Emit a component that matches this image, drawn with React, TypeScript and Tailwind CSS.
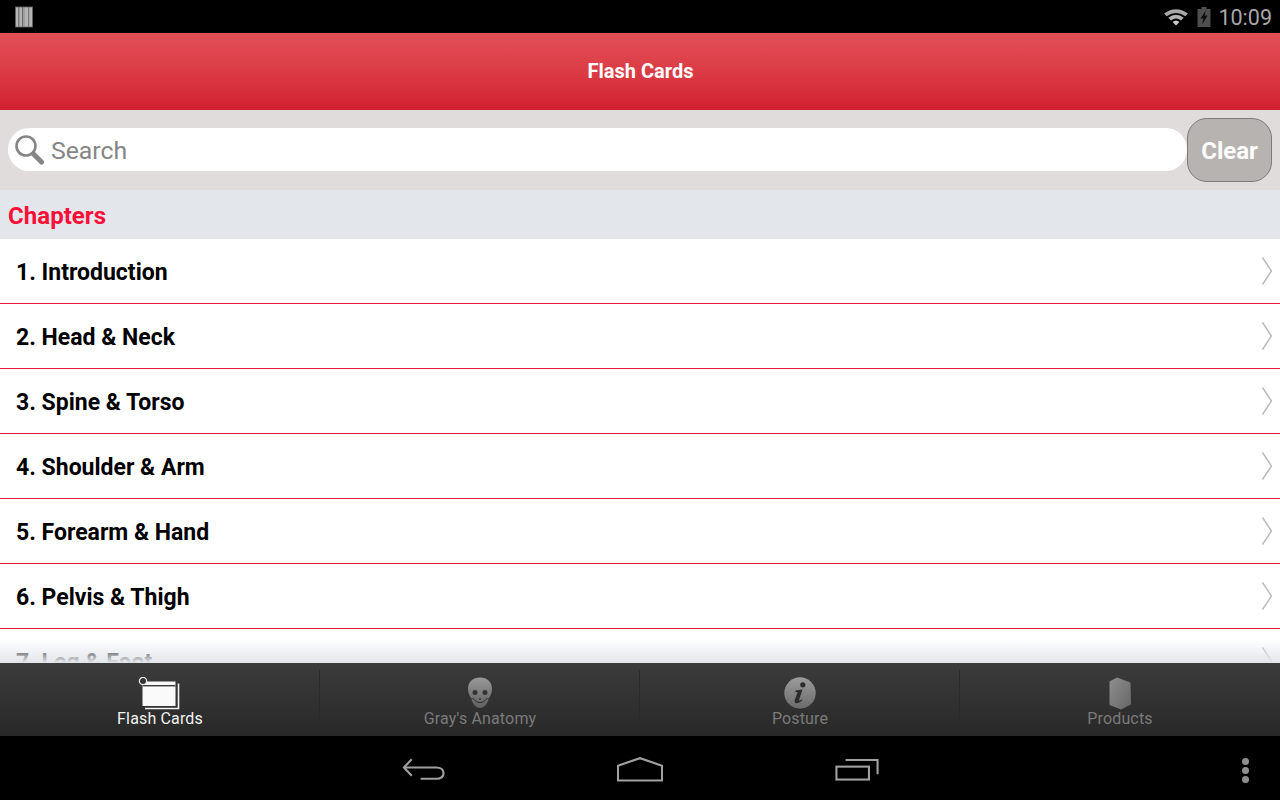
import React from "react";

const chapters = ["1. Introduction", "2. Head & Neck", "3. Spine & Torso", "4. Shoulder & Arm", "5. Forearm & Hand", "6. Pelvis & Thigh", "7. Leg & Foot"];

function Chevron() {
  return (
    <svg width="14" height="30" viewBox="0 0 14 30" className="shrink-0" fill="none">
      <path d="M1.5 1.5 L10.5 15 L1.5 28.5" stroke="#b9b9b9" strokeWidth="1.4" />
    </svg>
  );
}

function Barcode() {
  return (
    <svg width="18" height="22" viewBox="0 0 18 22">
      <rect x="0.5" y="1" width="17" height="20" fill="#b5b5b5" />
      <rect x="3" y="1" width="1.5" height="20" fill="#777" />
      <rect x="7" y="1" width="1" height="20" fill="#666" />
      <rect x="8.5" y="1" width="1" height="20" fill="#888" />
      <rect x="13" y="1" width="1.2" height="20" fill="#777" />
      <rect x="0" y="1" width="18" height="20" fill="none" stroke="#666" strokeWidth="0.8" />
    </svg>
  );
}

function Wifi() {
  return (
    <svg width="26" height="18" viewBox="0 0 26 18" fill="none">
      <path d="M1 5.5 Q13 -3 25 5.5 L22.3 8.3 Q13 1.5 3.7 8.3 Z" fill="#a8a8a8" />
      <path d="M5.3 9.8 Q13 3.5 20.7 9.8 L18 12.5 Q13 8.5 8 12.5 Z" fill="#b4b4b4" />
      <path d="M9.5 14 Q13 10.8 16.5 14 L13 17.5 Z" fill="#c8c8c8" />
    </svg>
  );
}

function Battery() {
  return (
    <svg width="14" height="20" viewBox="0 0 14 20">
      <rect x="4.5" y="0" width="5" height="2" fill="#4e4e4e" />
      <rect x="0.5" y="2" width="13" height="18" fill="#4e4e4e" />
      <path d="M8.8 3.5 L3.5 11.5 H6.5 L5.2 17.5 L10.5 8.5 H7.5 Z" fill="#0c0c0c" />
    </svg>
  );
}

function Magnifier() {
  return (
    <svg width="31" height="32" viewBox="0 0 31 32" fill="none">
      <circle cx="12" cy="12" r="9.5" stroke="#868686" strokeWidth="2.6" fill="#fff" />
      <path d="M20 20.5 L27.5 28" stroke="#868686" strokeWidth="5" strokeLinecap="round" />
    </svg>
  );
}

function CardsIcon() {
  return (
    <svg width="44" height="33" viewBox="0 0 44 33" fill="none">
      <path d="M40.5 6.5 V31.5 H7" stroke="#f2f2f2" strokeWidth="1.6" />
      <rect x="4.5" y="4.5" width="33" height="24.5" fill="#fafafa" />
      <rect x="4.5" y="8" width="33" height="1.4" fill="#3a3a3a" />
      <circle cx="5" cy="4" r="3.6" stroke="#e8e8e8" strokeWidth="1.3" fill="#333" />
    </svg>
  );
}

function SkullIcon() {
  return (
    <svg width="26" height="32" viewBox="0 0 26 32">
      <defs>
        <linearGradient id="sk" x1="0" y1="0" x2="0" y2="1">
          <stop offset="0" stopColor="#9a9a9a" />
          <stop offset="1" stopColor="#5f5f5f" />
        </linearGradient>
      </defs>
      <path d="M13 0.5 C20 0.5 25 5 25 11.5 C25 16 23.5 19 21.5 21.5 C21 26 18 30.5 13 31 C8 30.5 5 26 4.5 21.5 C2.5 19 1 16 1 11.5 C1 5 6 0.5 13 0.5 Z" fill="url(#sk)" />
      <circle cx="8" cy="15.5" r="2.5" fill="#333" />
      <circle cx="18" cy="15.5" r="2.5" fill="#333" />
      <circle cx="13" cy="22" r="0.9" fill="#333" />
      <path d="M5.5 21 Q13 30 20.5 21" stroke="#333" strokeWidth="1.1" fill="none" />
    </svg>
  );
}

function InfoIcon() {
  return (
    <svg width="32" height="32" viewBox="0 0 32 32">
      <defs>
        <linearGradient id="inf" x1="0" y1="0" x2="0" y2="1">
          <stop offset="0" stopColor="#9c9c9c" />
          <stop offset="1" stopColor="#6a6a6a" />
        </linearGradient>
      </defs>
      <circle cx="16" cy="16" r="15.7" fill="url(#inf)" />
      <circle cx="18.8" cy="7.8" r="2.6" fill="#2c2c2c" />
      <path d="M11.5 13.5 L18.5 12.5 L15 23 C14.8 24 15.6 24.2 18 22.3 L18.4 23.3 C15.5 26 13.4 26.5 11.6 26 C10.3 25.5 10.4 24 10.8 22.8 L13.6 15.3 L11.3 15 Z" fill="#2c2c2c" />
    </svg>
  );
}

function BoxIcon() {
  return (
    <svg width="24" height="33" viewBox="0 0 24 33">
      <defs>
        <linearGradient id="bx" x1="0" y1="0" x2="1" y2="1">
          <stop offset="0" stopColor="#8f8f8f" />
          <stop offset="1" stopColor="#666" />
        </linearGradient>
      </defs>
      <path d="M9 0.5 L22.5 5.5 L23 27.5 L13 32.5 L1.5 28 L1.5 4.5 Z" fill="url(#bx)" />
    </svg>
  );
}

function Tab({ label, active, icon, divider }: { label: string; active?: boolean; icon: React.ReactNode; divider?: boolean }) {
  return (
    <div className="relative flex-1 flex flex-col items-center">
      <div className="h-[38px] mt-[14px] flex items-start justify-center">{icon}</div>
      <span className={`text-[16px] leading-[19px] -mt-[6px] tracking-[0.15px] ${active ? "text-[#f2f2f2]" : "text-[#7a7a7a]"}`}>{label}</span>
      {divider && <div className="absolute right-0 top-[7px] bottom-[14px] w-px bg-[#2a2a2a]" />}
    </div>
  );
}

export default function App() {
  return (
    <div className="w-[1280px] h-[800px] flex flex-col overflow-hidden bg-white font-['Roboto',sans-serif]">
      <div className="h-[33px] bg-black flex items-center justify-between pl-[15px] pr-[8px] shrink-0">
        <Barcode />
        <div className="flex items-center">
          <Wifi />
          <div className="ml-[8px] mr-[7px]"><Battery /></div>
          <span className="text-[21.5px] leading-none text-[#a8a8a8] pt-[2px]">10:09</span>
        </div>
      </div>

      <div className="h-[77px] shrink-0 flex items-center justify-center bg-gradient-to-b from-[#e35058] to-[#d21f30]">
        <span className="text-white font-bold text-[20px] leading-none -mt-[2px] pl-[1px]">Flash Cards</span>
      </div>

      <div className="h-[80px] shrink-0 bg-[#e0dcdb] flex items-center pl-[8px] pr-[8px]">
        <div className="flex-1 h-[43px] -mt-[1px] bg-white rounded-[21px] flex items-center pl-[6px]">
          <Magnifier />
          <span className="ml-[6px] text-[24.8px] leading-none text-[#858585] pt-[4px]">Search</span>
        </div>
        <div className="w-[85px] h-[64px] -mt-[1px] shrink-0 rounded-[20px] bg-[#b7b3b1] border border-[#7c7a79] flex items-center justify-center">
          <span className="text-white font-bold text-[24px] leading-none pt-[2px]">Clear</span>
        </div>
      </div>

      <div className="h-[49px] shrink-0 bg-[#e3e6eb] flex items-center pl-[8px]">
        <span className="text-[#fb0f38] font-bold text-[24px] leading-none pt-[3px] tracking-[0.05px]">Chapters</span>
      </div>

      <div className="relative flex-1 min-h-0 overflow-hidden">
        {chapters.map((c) => (
          <div key={c} className="h-[65px] border-b border-[#e5173f] flex items-center justify-between pl-[16px] pr-[5px]">
            <span className="text-black font-bold text-[23px] leading-none pt-[3px]">{c}</span>
            <Chevron />
          </div>
        ))}
        <div className="absolute left-0 right-0 bottom-0 h-[24px] bg-gradient-to-b from-white/0 to-[#e3e6eb]" />
      </div>

      <div className="h-[73px] shrink-0 flex bg-gradient-to-b from-[#3c3c3c] to-[#282828]">
        <Tab label="Flash Cards" active icon={<CardsIcon />} divider />
        <Tab label="Gray's Anatomy" icon={<SkullIcon />} divider />
        <Tab label="Posture" icon={<InfoIcon />} divider />
        <Tab label="Products" icon={<BoxIcon />} />
      </div>

      <div className="relative h-[64px] shrink-0 bg-black flex items-center justify-center">
        <div className="flex items-center gap-[172px] pl-[1px] pt-[2px] text-[#a0a0a0]">
          <svg width="43" height="24" viewBox="0 0 44 24" fill="none" stroke="#a0a0a0" strokeWidth="2.2">
            <path d="M10 2 L2 10.5 L10 19" />
            <path d="M2 10.5 H35 C40 10.5 42.5 13 42.5 16 C42.5 19.5 40 22 35 22 H19" />
          </svg>
          <svg width="46" height="25" viewBox="0 0 48 26" fill="none" stroke="#a0a0a0" strokeWidth="2.2">
            <path d="M1 24.5 V9 L24 1.2 L47 9 V24.5 Z" />
          </svg>
          <svg width="44" height="23" viewBox="0 0 46 24" fill="none" stroke="#a0a0a0" strokeWidth="2.2">
            <rect x="1.5" y="9" width="34" height="13.5" />
            <path d="M11 2 H44.5 V17" />
          </svg>
        </div>
        <div className="absolute right-[31px] top-[22px] flex flex-col gap-[2px]">
          <div className="w-[7px] h-[7px] rounded-full bg-[#8f8f8f]" />
          <div className="w-[7px] h-[7px] rounded-full bg-[#8f8f8f]" />
          <div className="w-[7px] h-[7px] rounded-full bg-[#8f8f8f]" />
        </div>
      </div>
    </div>
  );
}
